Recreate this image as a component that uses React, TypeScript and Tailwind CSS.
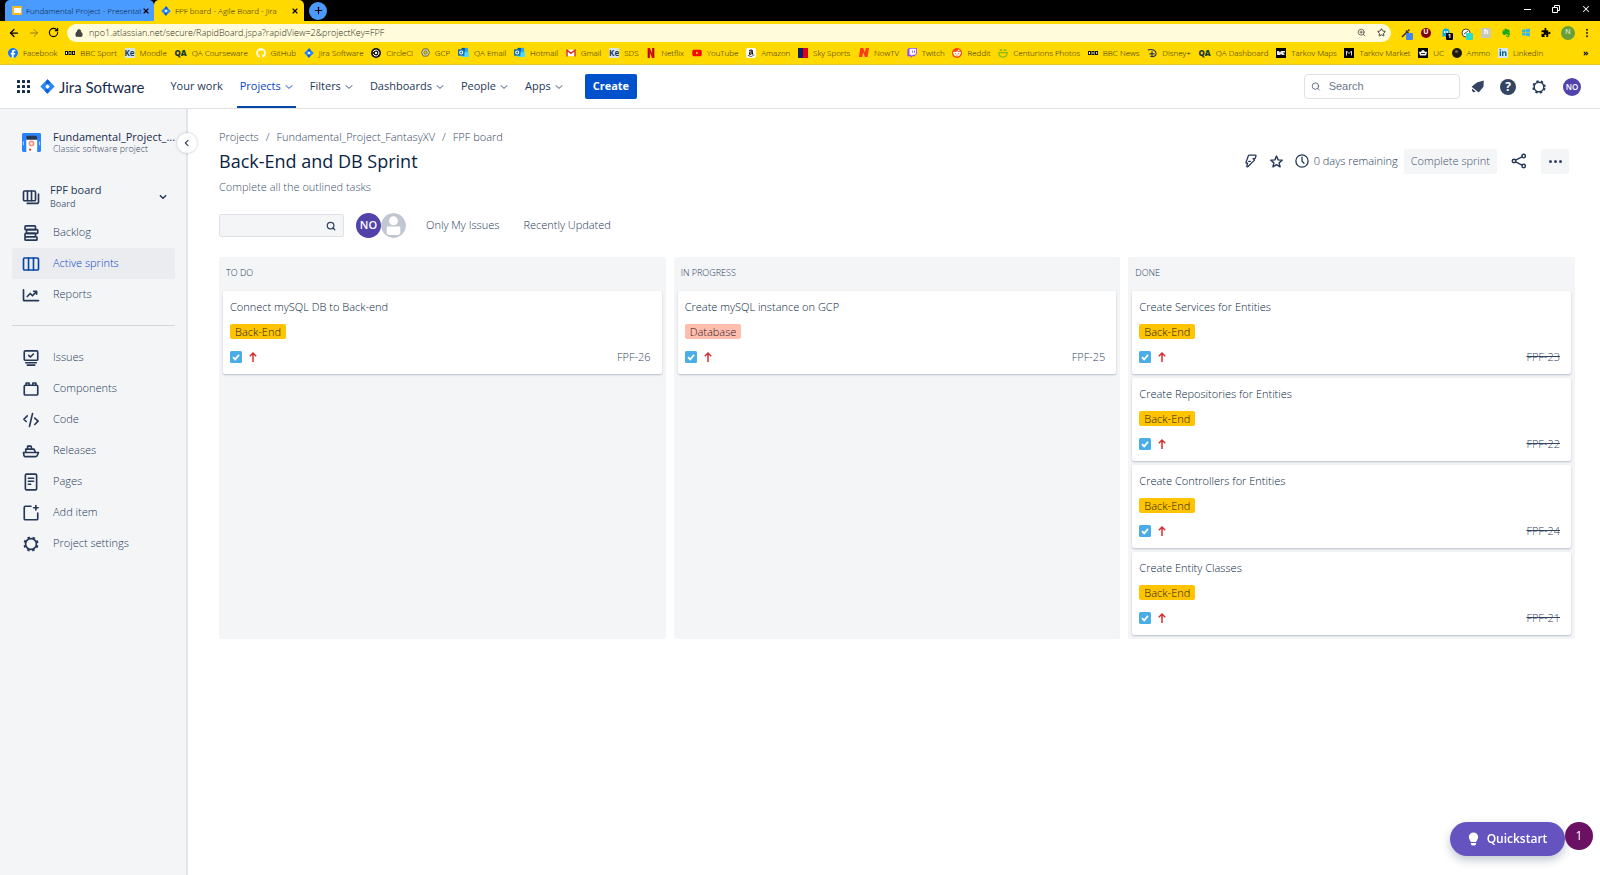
import type { ReactNode } from "react";
import {
  FaAmazon,
  FaEvernote,
  FaFacebook,
  FaGithub,
  FaLinkedinIn,
  FaPuzzlePiece,
  FaRedditAlien,
  FaWindows,
  FaYoutube,
} from "react-icons/fa6";
import { ArrowLeft, ArrowRight, Lock, Plus, RotateCw, Search, Star, X, ZoomIn } from "lucide-react";

/* ---------- Browser chrome ---------- */

function JiraMark({ className }: { className?: string }) {
  return (
    <svg viewBox="0 0 24 24" className={className} aria-hidden="true">
      <path d="M12 0.5 23.5 12 12 23.5 0.5 12Z" fill="#2684ff" />
      <path d="M12 0.5 17 5.5 12 9 9 5.5ZM12 23.5 7 18.5 12 15 15 18.5Z" fill="#0f5fd6" />
      <path d="M12 8.2 15.8 12 12 15.8 8.2 12Z" fill="#fff" />
    </svg>
  );
}

function Tile({ className, children }: { className: string; children?: ReactNode }) {
  return (
    <span
      aria-hidden="true"
      className={`flex h-[10px] w-[10px] items-center justify-center overflow-hidden text-[8px] leading-none ${className}`}
    >
      {children}
    </span>
  );
}

function BbcIcon() {
  return (
    <svg viewBox="0 0 10 10" className="h-[10px] w-[10px]" aria-hidden="true">
      <path d="M0 3h3v4H0zM3.5 3h3v4h-3zM7 3h3v4H7z" fill="#111" />
      <path d="M1 4h1v2H1zM4.5 4h1v2h-1zM8 4h1.2v.6H8.6v.9h.6V6H8z" fill="#fff" />
    </svg>
  );
}

function QaIcon() {
  return <span aria-hidden="true" className="text-[8px] leading-none font-extrabold text-[#12352f]">QA</span>;
}

function OutlookIcon() {
  return (
    <svg viewBox="0 0 12 12" className="h-[11px] w-[11px]" aria-hidden="true">
      <path d="M4 1h7v7H4z" fill="#28a8ea" />
      <path d="M4 1h3.5v3.5H4z" fill="#0f4f8f" />
      <path d="M4 7l8-2v6H4z" fill="#50d9ff" />
      <path d="M0 2.5h7v7H0z" fill="#0f6cbd" />
      <circle cx="3.5" cy="6" r="1.7" fill="none" stroke="#fff" strokeWidth="1.1" />
    </svg>
  );
}

function CircleCiIcon() {
  return (
    <svg viewBox="0 0 12 12" className="h-[10px] w-[10px]" aria-hidden="true">
      <circle cx="6" cy="6" r="6" fill="#161616" />
      <circle cx="6" cy="6" r="1.4" fill="#fff" />
      <path d="M2.6 5a3.5 3.5 0 1 1 0 2" fill="none" stroke="#fff" strokeWidth="1.2" />
    </svg>
  );
}

function GcpIcon() {
  return (
    <svg viewBox="0 0 12 12" className="h-[9px] w-[9px]" aria-hidden="true">
      <path d="M3.2 1.2h5.6L11.5 6l-2.7 4.8H3.2L.5 6Z" fill="#cfd0b0" stroke="#6b6a3a" strokeWidth="1.3" />
      <circle cx="6" cy="6" r="2" fill="#ffd900" stroke="#6b6a3a" strokeWidth="1.3" />
    </svg>
  );
}

function GmailIcon() {
  return (
    <svg viewBox="0 0 12 10" className="h-[8px] w-[10px]" aria-hidden="true">
      <path d="M1 1h10v8H1z" fill="#fff" />
      <path d="M1 9.5V1.5l5 4 5-4v8" fill="none" stroke="#d93025" strokeWidth="1.8" />
    </svg>
  );
}

function NetflixIcon({ slanted = false }: { slanted?: boolean }) {
  return slanted ? (
    <svg viewBox="0 0 12 12" className="h-[11px] w-[11px]" aria-hidden="true">
      <path d="M1 11 2.6 1h3l2 5 .9-5H12l-1.6 10H7.6l-2.1-5-.9 5Z" fill="#fb3b1e" />
    </svg>
  ) : (
    <svg viewBox="0 0 12 12" className="h-[10px] w-[10px]" aria-hidden="true">
      <path d="M2 0h2.6v12H2zM7.4 0H10v12H7.4z" fill="#b1060f" />
      <path d="M2 0h2.6L10 12H7.4Z" fill="#e50914" />
    </svg>
  );
}

function SmileIcon() {
  return (
    <svg viewBox="0 0 12 12" className="h-[10px] w-[10px]" aria-hidden="true" fill="none" stroke="#86b817" strokeWidth="1.4">
      <path d="M1 5.5h10c0 3.200-2 5.500-5 5.500S1 8.700 1 5.500ZM2.500 3.500c0-2 2-2 2 0M7.500 3.500c0-2 2-2 2 0" />
    </svg>
  );
}

function DisneyIcon() {
  return (
    <svg viewBox="0 0 12 12" className="h-[10px] w-[10px]" aria-hidden="true" fill="none" stroke="#1b2a6b" strokeWidth="1.300">
      <path d="M1 2.500C6 .500 11 3 11 7c0 3-4 4-7 3M6 4v7M3 7.500c2-1.500 5-1 6 0" />
    </svg>
  );
}

const bookmarks: { label: string; icon: ReactNode }[] = [
  {
    label: "Facebook",
    icon: (
      <span className="rounded-full bg-white">
        <FaFacebook className="h-[10px] w-[10px] text-[#1877f2]" />
      </span>
    ),
  },
  { label: "BBC Sport", icon: <BbcIcon /> },
  { label: "Moodle", icon: <Tile className="bg-[#dbe4e4] font-bold text-[#123c7a]">Ke</Tile> },
  { label: "QA Courseware", icon: <QaIcon /> },
  { label: "GitHub", icon: <FaGithub className="h-[10px] w-[10px] text-white" /> },
  { label: "Jira Software", icon: <JiraMark className="h-[10px] w-[10px]" /> },
  { label: "CircleCI", icon: <CircleCiIcon /> },
  { label: "GCP", icon: <GcpIcon /> },
  { label: "QA Email", icon: <OutlookIcon /> },
  { label: "Hotmail", icon: <OutlookIcon /> },
  { label: "Gmail", icon: <GmailIcon /> },
  { label: "SDS", icon: <Tile className="bg-[#dbe4e4] font-bold text-[#123c7a]">Ke</Tile> },
  { label: "Netflix", icon: <NetflixIcon /> },
  { label: "YouTube", icon: <FaYoutube className="h-[10px] w-[10px] text-[#f00]" /> },
  {
    label: "Amazon",
    icon: (
      <Tile className="rounded-[2px] bg-white text-black">
        <FaAmazon className="h-[8px] w-[8px]" />
      </Tile>
    ),
  },
  {
    label: "Sky Sports",
    icon: (
      <Tile className="bg-[#0b1f6b]">
        <span className="ml-auto h-full w-[5px] bg-[#e10019]" />
      </Tile>
    ),
  },
  { label: "NowTV", icon: <NetflixIcon slanted /> },
  {
    label: "Twitch",
    icon: (
      <svg viewBox="0 0 12 12" className="h-[10px] w-[10px]" aria-hidden="true">
        <path d="M2 0h10v7L9 10H6.500L4.500 12V10H.5V2Z" fill="#9146ff" />
        <path d="M3 1h8v5.500L9.500 8H7L5.300 9.500V8H3Z" fill="#fff" />
        <path d="M6 3h1v2.800H6zM8.600 3h1v2.800h-1z" fill="#9146ff" />
      </svg>
    ),
  },
  {
    label: "Reddit",
    icon: (
      <Tile className="rounded-full bg-[#ff4500] text-white">
        <FaRedditAlien className="h-[8px] w-[8px]" />
      </Tile>
    ),
  },
  { label: "Centurions Photos", icon: <SmileIcon /> },
  { label: "BBC News", icon: <BbcIcon /> },
  { label: "Disney+", icon: <DisneyIcon /> },
  { label: "QA Dashboard", icon: <QaIcon /> },
  {
    label: "Tarkov Maps",
    icon: (
      <svg viewBox="0 0 10 10" className="h-[10px] w-[10px]" aria-hidden="true">
        <path d="M0 0h10v10H0z" fill="#000" />
        <path d="M1 3h2l1 1.500L5 3h4v1.500H7L9 7H6L5 6 4 7H1Z" fill="#e6e6e6" />
      </svg>
    ),
  },
  {
    label: "Tarkov Market",
    icon: (
      <svg viewBox="0 0 10 10" className="h-[10px] w-[10px]" aria-hidden="true">
        <path d="M0 0h10v10H0z" fill="#000" />
        <path d="M2.500 7.500V3L5 5.500 7.500 3v4.500" fill="none" stroke="#d8d8d8" />
      </svg>
    ),
  },
  {
    label: "UC",
    icon: (
      <svg viewBox="0 0 10 10" className="h-[10px] w-[10px]" aria-hidden="true">
        <path d="M0 0h10v10H0z" fill="#000" />
        <path d="M1 4q1-1 2 0 .5-2 2-2t2 2q1-1 2 0L8 7.500H2Z" fill="#f2f2f2" />
        <path d="M3 5.500h4" stroke="#000" strokeWidth=".8" />
      </svg>
    ),
  },
  {
    label: "Ammo",
    icon: (
      <Tile className="rounded-full bg-[#1d1a10]">
        <span className="mb-[2px] h-[3px] w-[3px] rounded-full bg-[#6d684a]" />
      </Tile>
    ),
  },
  {
    label: "LinkedIn",
    icon: (
      <Tile className="bg-[#d5e6ee]">
        <FaLinkedinIn className="h-[8px] w-[8px] text-[#0a66a2]" />
      </Tile>
    ),
  },
];

function Browser() {
  return (
    <div className="text-[#1f1b00]">
      <div className="flex h-[21px] items-stretch bg-black pl-[5px]">
        <div className="flex w-[149px] items-center rounded-t-[5px] bg-[#4a9bff] pr-[5px] pl-[7px] text-[#04152a]">
          <span className="flex h-[9px] w-[10px] shrink-0 items-center justify-center rounded-[1px] bg-[#f5ba26]">
            <span className="h-[5px] w-[7px] bg-white" />
          </span>
          <span className="ml-1 text-[8px] leading-3 font-light whitespace-nowrap">Fundamental Project - Presentat</span>
          <button type="button" aria-label="Close tab" className="ml-auto text-black">
            <X className="h-[8px] w-[8px]" strokeWidth={3.5} />
          </button>
        </div>
        <div className="flex w-[150px] items-center rounded-t-[5px] bg-[#ffd900] pr-[5px] pl-[7px]">
          <JiraMark className="h-[10px] w-[10px]" />
          <span className="ml-1 text-[8px] leading-3 font-light whitespace-nowrap">FPF board - Agile Board - Jira</span>
          <button type="button" aria-label="Close tab" className="ml-auto text-black">
            <X className="h-[8px] w-[8px]" strokeWidth={3.5} />
          </button>
        </div>
        <button
          type="button"
          aria-label="New tab"
          className="ml-[5px] flex h-[18px] w-[18px] items-center justify-center self-center rounded-full bg-[#4a9bff] text-black"
        >
          <Plus className="h-[11px] w-[11px]" strokeWidth={2.5} />
        </button>
        <div className="mr-[9px] ml-auto flex items-center gap-[21px] pb-[3px] text-white">
          <button type="button" aria-label="Minimise">
            <span className="block h-px w-[7px] bg-white" />
          </button>
          <button type="button" aria-label="Restore">
            <svg viewBox="0 0 8 8" className="h-[8px] w-[8px]" fill="none" stroke="currentColor" strokeWidth="1">
              <path d="M.5 2.500h5v5h-5zM2.500 2.500v-2h5v5h-2" />
            </svg>
          </button>
          <button type="button" aria-label="Close window">
            <X className="h-[10px] w-[10px]" strokeWidth={2.500} />
          </button>
        </div>
      </div>

      <div className="flex h-[23px] items-center bg-[#ffd900] pr-[11px] pl-[8px] text-black">
        <button type="button" aria-label="Back">
          <ArrowLeft className="h-[12px] w-[12px]" strokeWidth={2.500} />
        </button>
        <button type="button" aria-label="Forward" className="ml-2 text-[#8f7c10]">
          <ArrowRight className="h-[12px] w-[12px]" />
        </button>
        <button type="button" aria-label="Reload" className="ml-2">
          <RotateCw className="h-[11px] w-[11px]" strokeWidth={2.500} />
        </button>
        <div className="ml-2 flex h-[18px] flex-1 items-center rounded-full bg-[#fffbdb] pr-[5px] pl-2">
          <Lock className="h-[8px] w-[8px] fill-[#444] text-[#444]" strokeWidth={3} />
          <input
            aria-label="Address"
            defaultValue="npo1.atlassian.net/secure/RapidBoard.jspa?rapidView=2&projectKey=FPF"
            className="ml-1.5 min-w-0 flex-1 bg-transparent text-[9px] leading-3 font-light text-[#2b2b22] outline-none"
          />
          <ZoomIn className="h-[9px] w-[9px] text-[#444]" />
          <Star className="ml-[11px] h-[9px] w-[9px] text-[#333]" strokeWidth={2.500} />
        </div>
        <div className="ml-[10px] flex items-center gap-[10px]">
          <span className="relative h-[10px] w-[10px]">
            <svg viewBox="0 0 10 10" className="h-[10px] w-[10px]" stroke="#333" strokeWidth="1.500">
              <path d="M1 9 6 4M5 2.500 7.500 5M7 3 8.500 1.500" />
            </svg>
            <span className="absolute top-[5px] left-[5px] h-[7px] w-[7px] rounded-[1px] bg-[#4285f4]" />
          </span>
          <span className="flex h-[10px] w-[10px] items-center justify-center rounded-full bg-[#800000] text-[7px] font-bold text-white">
            U
          </span>
          <span className="relative h-[10px] w-[10px]">
            <svg viewBox="0 0 10 10" className="h-[10px] w-[10px]">
              <path d="M1.500 9V4a3.500 3.500 0 0 1 7 0v5l-1.700-1L5 9 3.300 8Z" fill="#00aef0" />
              <circle cx="3.700" cy="4" r=".9" fill="#fff" />
              <circle cx="6.300" cy="4" r=".9" fill="#fff" />
            </svg>
            <span className="absolute top-[5px] left-[5px] flex h-[7px] w-[7px] items-center justify-center rounded-[1px] bg-black text-[6px] font-bold text-white">
              1
            </span>
          </span>
          <span className="relative h-[10px] w-[10px]">
            <svg viewBox="0 0 10 10" className="h-[10px] w-[10px]" fill="#fff" stroke="#444">
              <circle cx="5" cy="5" r="4" />
              <path d="M3 6 7 3" />
            </svg>
            <span className="absolute top-[5px] left-[5px] h-[7px] w-[7px] rounded-[1px] bg-[#2bdccb]" />
          </span>
          <span className="flex h-[10px] w-[10px] items-center justify-center rounded-[1px] bg-[#c8c8bd] text-[7px] font-bold text-white">
            h
          </span>
          <FaEvernote className="h-[10px] w-[10px] text-[#17a81a]" />
          <FaWindows className="h-[9px] w-[10px] text-[#38b6e8]" />
          <FaPuzzlePiece className="h-[9px] w-[10px] text-black" />
          <span className="flex h-[14px] w-[14px] items-center justify-center rounded-full bg-[#689f38] text-[7px] text-white">
            N
          </span>
          <button type="button" aria-label="Browser menu">
            <svg viewBox="0 0 4 12" className="h-[10px] w-[4px]" fill="#222">
              <circle cx="2" cy="2" r="1.200" />
              <circle cx="2" cy="6" r="1.200" />
              <circle cx="2" cy="10" r="1.200" />
            </svg>
          </button>
        </div>
      </div>

      <div className="flex h-[21px] items-center justify-between border-b border-[#e3c62a] bg-[#ffd900] pr-[11px] pb-[3px] pl-[8px] text-[8px] leading-3 font-light">
        {bookmarks.map((b, i) => (
          <a key={i} href="#" className="flex items-center gap-[5px] whitespace-nowrap">
            {b.icon}
            {b.label}
          </a>
        ))}
        <button type="button" aria-label="More bookmarks" className="ml-8 text-[9px] font-bold text-black">
          »
        </button>
      </div>
    </div>
  );
}

/* ---------- Icons ---------- */

function Line({ children, className = "h-[18px] w-[18px]" }: { children: ReactNode; className?: string }) {
  return (
    <svg
      viewBox="0 0 24 24"
      className={className}
      fill="none"
      stroke="currentColor"
      strokeWidth="2.200"
      strokeLinejoin="round"
      strokeLinecap="round"
      aria-hidden="true"
    >
      {children}
    </svg>
  );
}

function Chevron() {
  return (
    <Line className="h-[8px] w-[8px]">
      <path d="M3 8l9 8 9-8" strokeWidth="3.200" />
    </Line>
  );
}

function Gear({ className }: { className?: string }) {
  return (
    <svg viewBox="0 0 24 24" className={className} aria-hidden="true" fill="none" stroke="currentColor">
      <circle cx="12" cy="12" r="7.200" strokeWidth="2.200" />
      <circle cx="12" cy="12" r="8.800" strokeWidth="2.600" strokeDasharray="3.400 3.512" strokeDashoffset="-1.800" />
    </svg>
  );
}

const BoardsIcon = (
  <Line>
    <rect x="2" y="4" width="16" height="13" rx="1.500" />
    <path d="M7.300 4v13M12.700 4v13M7 20.500h13.500q1.500 0 1.500-1.500V8" />
  </Line>
);
const BacklogIcon = (
  <Line>
    <rect x="4" y="2.500" width="14" height="5" rx="1" />
    <rect x="6" y="7.500" width="15" height="5" rx="1" />
    <rect x="4" y="12.500" width="14" height="4.500" rx="1" />
    <rect x="4" y="17" width="16" height="4.500" rx="1" />
  </Line>
);
const SprintIcon = (
  <Line>
    <rect x="2" y="4" width="20" height="16" rx="1.500" />
    <path d="M8.700 4v16M15.300 4v16" />
  </Line>
);
const ReportsIcon = (
  <Line>
    <path d="M2 5v13.500q0 1 1 1h19M7 14l4-4 3 3 5-5.500M15.500 7h4v4" />
  </Line>
);
const IssuesIcon = (
  <Line>
    <rect x="3" y="2.500" width="18" height="12.500" rx="1.500" />
    <path d="M9 8.500l2.200 2.200 4-4M5 18.300h14M7 21.500h10" />
  </Line>
);
const ComponentsIcon = (
  <Line>
    <rect x="3" y="7" width="18" height="13" rx="1.500" />
    <path d="M5.500 7V4h4v3M14.500 7V4h4v3" />
  </Line>
);
const CodeIcon = (
  <Line>
    <path d="M7 6.500 2.500 11l3 3M17 9.500l4.500 4L17 18M14 3.500l-4 17" />
  </Line>
);
const ReleasesIcon = (
  <Line>
    <path d="M2 14h20l-2 4.500q-.6 1-1.700 1H4q-1 0-1.300-1ZM5 14V9.500h11l2 4.500M7.500 9V5.500h4.500l1 3.500" />
  </Line>
);
const PagesIcon = (
  <Line>
    <rect x="4.500" y="1.500" width="15" height="21" rx="1.500" />
    <path d="M8.500 7h7M8.500 11h7M8.500 15h3" />
  </Line>
);
const AddIcon = (
  <Line>
    <path d="M12 3H4.500Q3 3 3 4.500v15Q3 21 4.500 21h15q1.500 0 1.500-1.500V12M18.500 2v6M15.500 5h6" />
  </Line>
);

/* ---------- Jira header ---------- */

const navItems = [
  { label: "Your work", menu: false, active: false },
  { label: "Projects", menu: true, active: true },
  { label: "Filters", menu: true, active: false },
  { label: "Dashboards", menu: true, active: false },
  { label: "People", menu: true, active: false },
  { label: "Apps", menu: true, active: false },
];

function Header() {
  return (
    <header className="flex h-[44px] items-stretch border-b border-[#dfe1e6] bg-white pr-[19px] pl-[17px]">
      <button type="button" aria-label="Switch product" className="text-[#172b4d]">
        <svg viewBox="0 0 13 13" className="h-[13px] w-[13px]" fill="currentColor">
          {[0, 5, 10].map((y) => [0, 5, 10].map((x) => <rect key={`${x}-${y}`} x={x} y={y} width="3" height="3" rx=".6" />))}
        </svg>
      </button>
      <a href="#" className="ml-[10px] flex items-center gap-1 text-[#172b4d]">
        <JiraMark className="h-[15px] w-[15px]" />
        <span className="font-['Lato','Open_Sans',sans-serif] text-[15px] leading-5 whitespace-nowrap">Jira Software</span>
      </a>
      <nav className="ml-[23px] flex items-stretch gap-[11px]">
        {navItems.map((n) => (
          <button
            key={n.label}
            type="button"
            className={
              n.active
                ? "flex items-center gap-1 border-b-2 border-[#0747a6] px-[3px] pt-[2px] text-[11px] whitespace-nowrap text-[#0747c6]"
                : "flex items-center gap-1 px-[3px] text-[11px] whitespace-nowrap text-[#253858]"
            }
          >
            {n.label}
            {n.menu && (
              <span className={n.active ? "text-[#5b83d8]" : "text-[#7a869a]"}>
                <Chevron />
              </span>
            )}
          </button>
        ))}
      </nav>
      <button
        type="button"
        className="ml-[19px] h-[25px] self-center rounded-[2px] bg-[#0052cc] px-2 text-[11px] font-bold text-white"
      >
        Create
      </button>
      <div className="ml-auto flex items-center">
        <label className="flex h-[25px] w-[156px] items-center rounded-[4px] border border-[#dfe1e6] px-[6px]">
          <Search className="h-[11px] w-[11px] text-[#42526e]" />
          <input
            type="text"
            aria-label="Search"
            placeholder="Search"
            className="ml-2 w-full min-w-0 bg-transparent font-['Liberation_Sans',sans-serif] text-[11px] outline-none placeholder:text-[#6b778c]"
          />
        </label>
        <button type="button" aria-label="Notifications" className="ml-[10px] text-[#344563]">
          <svg viewBox="0 0 24 24" className="h-[15px] w-[15px]" fill="currentColor">
            <path d="M22 2.500 21.500 12.500 14 21.500 2.500 12.500 11 5.500ZM3.500 15.500l5.500 4.300q-2 2.200-4.500.4T3.500 15.500Z" />
          </svg>
        </button>
        <button
          type="button"
          aria-label="Help"
          className="ml-[15px] flex h-[16px] w-[16px] items-center justify-center rounded-full bg-[#344563] text-[12px] leading-none font-bold text-white"
        >
          ?
        </button>
        <button type="button" aria-label="Settings" className="ml-[15px] text-[#253858]">
          <Gear className="h-[16px] w-[16px]" />
        </button>
        <button
          type="button"
          aria-label="Profile"
          className="ml-[16px] flex h-[18px] w-[18px] items-center justify-center rounded-full bg-[#5243aa] text-[8px] font-semibold text-white"
        >
          NO
        </button>
      </div>
    </header>
  );
}

/* ---------- Sidebar ---------- */

function SideLink({ icon, label, active = false }: { icon: ReactNode; label: string; active?: boolean }) {
  return (
    <a
      href="#"
      className={
        active
          ? "flex h-[31px] items-center gap-[13px] rounded-[2px] bg-[#ebecf0] pl-[10px] text-[#0747a6]"
          : "flex h-[31px] items-center gap-[13px] pl-[10px] text-[#253858]"
      }
    >
      {icon}
      <span className={active ? "text-[11px] font-light text-[#0747c6]" : "text-[11px] font-light text-[#253858]"}>{label}</span>
    </a>
  );
}

function Sidebar() {
  return (
    <aside className="relative w-[188px] shrink-0 border-r-2 border-[#e1e4e8] bg-[#f4f5f7] pt-[22px] pr-[11px] pl-3">
      <div className="flex items-center gap-3 pl-[10px]">
        <svg viewBox="0 0 20 20" className="h-[19px] w-[19px] shrink-0" aria-hidden="true">
          <rect width="20" height="20" rx="1.500" fill="#2684ff" />
          <path d="M4.500 20V6q0-3 3-3h6q2.500 0 2.500 3v14Z" fill="#fff" />
          <path d="M4.500 7V4.500q0-2 3-2h6q2.500 0 2.500 2V7Z" fill="#253858" />
          <circle cx="10" cy="11" r="3" fill="#ff8f73" />
          <circle cx="10" cy="11" r="1.300" fill="#fff" />
          <path d="M7.500 16.500h2v2h-2z" fill="#de350b" />
          <path d="M1.500 9v4M18.500 9v4" stroke="#b3d4ff" strokeWidth="1.200" />
        </svg>
        <div className="whitespace-nowrap">
          <div className="text-[11px] leading-[12px] text-[#172b4d]">Fundamental_Project_...</div>
          <div className="text-[9px] leading-[11px] font-light text-[#344563]">Classic software project</div>
        </div>
      </div>
      <button
        type="button"
        aria-label="Collapse sidebar"
        className="absolute top-[24px] -right-[11px] flex h-[20px] w-[20px] items-center justify-center rounded-full bg-white text-[#344563] shadow-[0_0_2px_1px_rgba(9,30,66,0.120)]"
      >
        <Line className="h-[8px] w-[8px]">
          <path d="M15 4l-8 8 8 8" strokeWidth="3.500" />
        </Line>
      </button>

      <button type="button" className="mt-[25px] flex h-[36px] w-full items-center gap-[10px] pl-[10px] text-left text-[#253858]">
        {BoardsIcon}
        <span>
          <span className="block text-[11px] leading-[14px] font-medium text-[#253858]">FPF board</span>
          <span className="block text-[9px] leading-[14px] text-[#505f79]">Board</span>
        </span>
        <span className="mr-2 ml-auto">
          <Line className="h-[8px] w-[8px]">
            <path d="M4 8l8 8 8-8" strokeWidth="4.500" />
          </Line>
        </span>
      </button>
      <nav className="mt-[2px]">
        <SideLink icon={BacklogIcon} label="Backlog" />
        <SideLink icon={SprintIcon} label="Active sprints" active />
        <SideLink icon={ReportsIcon} label="Reports" />
        <hr className="mt-[15px] mb-4 border-[#d3d6dc]" />
        <SideLink icon={IssuesIcon} label="Issues" />
        <SideLink icon={ComponentsIcon} label="Components" />
        <SideLink icon={CodeIcon} label="Code" />
        <SideLink icon={ReleasesIcon} label="Releases" />
        <SideLink icon={PagesIcon} label="Pages" />
        <SideLink icon={AddIcon} label="Add item" />
        <SideLink icon={<Gear className="h-[18px] w-[18px]" />} label="Project settings" />
      </nav>
    </aside>
  );
}

/* ---------- Board ---------- */

type Issue = { key: string; title: string; tag: "Back-End" | "Database"; done?: boolean };

const columns: { name: string; issues: Issue[] }[] = [
  { name: "TO DO", issues: [{ key: "FPF-26", title: "Connect mySQL DB to Back-end", tag: "Back-End" }] },
  { name: "IN PROGRESS", issues: [{ key: "FPF-25", title: "Create mySQL instance on GCP", tag: "Database" }] },
  {
    name: "DONE",
    issues: [
      { key: "FPF-23", title: "Create Services for Entities", tag: "Back-End", done: true },
      { key: "FPF-22", title: "Create Repositories for Entities", tag: "Back-End", done: true },
      { key: "FPF-24", title: "Create Controllers for Entities", tag: "Back-End", done: true },
      { key: "FPF-21", title: "Create Entity Classes", tag: "Back-End", done: true },
    ],
  },
];

function Card({ issue }: { issue: Issue }) {
  return (
    <article className="rounded-[2px] bg-white px-[7px] pt-2 pb-[9px] shadow-[0_1px_2px_rgba(9,30,66,0.250)]">
      <h3 className="text-[11px] leading-4 font-light text-[#091e42]">{issue.title}</h3>
      <span
        className={
          issue.tag === "Database"
            ? "mt-[9px] block w-fit rounded-[2px] bg-[#ffbdad] px-[5px] text-[11px] leading-[15px] font-light text-[#33182b]"
            : "mt-[9px] block w-fit rounded-[2px] bg-[#ffc400] px-[5px] text-[11px] leading-[15px] font-light text-[#241b00]"
        }
      >
        {issue.tag}
      </span>
      <div className="mt-[10px] flex h-4 items-center">
        <svg viewBox="0 0 12 12" className="h-[12px] w-[12px]" role="img" aria-label="Task">
          <rect width="12" height="12" rx="1.500" fill="#4bade8" />
          <path d="M3 6.200 5.200 8.400 9 3.900" fill="none" stroke="#fff" strokeWidth="1.700" />
        </svg>
        <svg viewBox="0 0 12 12" className="ml-[5px] h-[12px] w-[12px]" role="img" aria-label="High priority">
          <path d="M6 11V2M2.800 5.200 6 2 9.200 5.200" fill="none" stroke="#d32f2f" strokeWidth="1.500" />
        </svg>
        <a
          href="#"
          className={
            issue.done
              ? "mr-1 ml-auto text-[11px] font-light text-[#344563] line-through"
              : "mr-1 ml-auto text-[11px] font-light text-[#344563]"
          }
        >
          {issue.key}
        </a>
      </div>
    </article>
  );
}

function Board() {
  return (
    <main className="min-w-0 flex-1 bg-white pr-[25px] pb-6 pl-[31px]">
      <div className="mt-[20px] flex gap-[7px] text-[11px] leading-4 font-light text-[#344563]">
        <a href="#">Projects</a>
        <span>/</span>
        <a href="#">Fundamental_Project_FantasyXV</a>
        <span>/</span>
        <a href="#">FPF board</a>
      </div>

      <div className="mt-[3px] flex items-center">
        <h1 className="text-[18px] leading-[26px] font-medium text-[#091e42]">Back-End and DB Sprint</h1>
        <div className="mr-[6px] ml-auto flex items-center text-[#253858]">
          <button type="button" aria-label="Automation">
            <Line className="h-[14px] w-[14px]">
              <path d="M9 2h10.500q1.500 0 1 1.500L19 8h-3.500l2.500 2.500L7 21.500q-2 1.500-2.300-.5l1.500-5.500H4.500Q3 15.500 3.500 14L7.500 3q.4-1 1.500-1ZM11 12.500h-3" />
            </Line>
          </button>
          <button type="button" aria-label="Star" className="ml-3">
            <Line className="h-[13px] w-[13px]">
              <path d="M12 2l3 7 7.500.6-5.700 4.900 1.800 7.300L12 17.800l-6.600 4 1.800-7.300L1.500 9.600 9 9Z" strokeWidth="2.600" />
            </Line>
          </button>
          <Line className="ml-3 h-[14px] w-[14px]">
            <circle cx="12" cy="12" r="10.500" />
            <path d="M12 5.500V12l3.500 4" />
          </Line>
          <span className="ml-[5px] text-[11px] font-light text-[#253858]">0 days remaining</span>
          <button type="button" className="ml-[6px] h-[25px] rounded-[2px] bg-[#f4f5f7] px-[7px] text-[11px] font-light text-[#42526e]">
            Complete sprint
          </button>
          <button type="button" aria-label="Share" className="ml-[14px]">
            <Line className="h-[16px] w-[16px]">
              <circle cx="4.500" cy="12" r="2.600" />
              <circle cx="19" cy="4.500" r="2.600" />
              <circle cx="19" cy="19.500" r="2.600" />
              <path d="M7 10.800 16.500 5.800M7 13.200l9.500 5" />
            </Line>
          </button>
          <button
            type="button"
            aria-label="More actions"
            className="ml-[14px] flex h-[25px] w-[28px] items-center justify-center gap-[2px] rounded-[2px] bg-[#f4f5f7]"
          >
            <span className="h-[3px] w-[3px] rounded-full bg-[#344563]" />
            <span className="h-[3px] w-[3px] rounded-full bg-[#344563]" />
            <span className="h-[3px] w-[3px] rounded-full bg-[#344563]" />
          </button>
        </div>
      </div>
      <p className="mt-[5px] text-[11px] leading-4 font-light text-[#42526e]">Complete all the outlined tasks</p>

      <div className="mt-[18px] flex h-[25px] items-center text-[11px] font-light text-[#253858]">
        <label className="flex h-[23px] w-[125px] items-center rounded-[2px] border border-[#dfe1e6] bg-[#f4f5f7] pr-[7px] pl-2">
          <input type="text" aria-label="Search this board" className="w-full min-w-0 bg-transparent outline-none" />
          <Search className="h-[10px] w-[10px] shrink-0 text-[#344563]" strokeWidth={3} />
        </label>
        <button
          type="button"
          aria-label="Filter by NO"
          className="ml-3 h-[25px] w-[25px] rounded-full bg-[#5243aa] text-[11px] font-semibold text-white"
        >
          NO
        </button>
        <button type="button" aria-label="Unassigned" className="h-[25px] w-[25px] overflow-hidden rounded-full">
          <svg viewBox="0 0 24 24" className="h-[25px] w-[25px]">
            <circle cx="12" cy="12" r="12" fill="#c1c7d0" />
            <circle cx="12" cy="7.500" r="4.300" fill="#fff" />
            <path d="M5.500 13h13v5.500q0 2.500-2.500 2.500H8q-2.500 0-2.500-2.500Z" fill="#fff" />
          </svg>
        </button>
        <button type="button" className="ml-5">
          Only My Issues
        </button>
        <button type="button" className="ml-6">
          Recently Updated
        </button>
      </div>

      <div className="mt-[19px] grid grid-cols-3 gap-2">
        {columns.map((c) => (
          <section key={c.name} className="rounded-[2px] bg-[#f4f5f7] px-1 pb-[4px]">
            <h2 className="px-[3px] pt-[10px] pb-[12px] text-[9px] leading-3 font-light text-[#253858]">{c.name}</h2>
            <div className="flex flex-col gap-1">
              {c.issues.map((i) => (
                <Card key={i.key} issue={i} />
              ))}
            </div>
          </section>
        ))}
      </div>
    </main>
  );
}

export default function App() {
  return (
    <div className="flex min-h-screen flex-col bg-white font-['Open_Sans','Noto_Sans',sans-serif]">
      <Browser />
      <Header />
      <div className="flex flex-1">
        <Sidebar />
        <Board />
      </div>
      <div className="fixed right-[7px] bottom-[19px] flex items-start">
        <button
          type="button"
          className="flex h-[34px] w-[115px] items-center justify-center gap-2 rounded-full bg-[#6554c0] text-[12px] font-semibold text-white shadow-[0_4px_10px_rgba(9,30,66,0.250)]"
        >
          <svg viewBox="0 0 12 16" className="h-[14px] w-[11px]" fill="currentColor" aria-hidden="true">
            <path d="M6 .5a5.300 5.300 0 0 1 5.300 5.300c0 2.400-1.500 3.700-2.300 5.700H3C2.200 9.500.7 8.200.7 5.800A5.300 5.300 0 0 1 6 .5ZM3 12.500h6v1q0 2-2 2H5q-2 0-2-2Z" />
          </svg>
          Quickstart
        </button>
        <span className="flex h-[28px] w-[28px] items-center justify-center rounded-full bg-[#6b1163] text-[12px] font-medium text-white">
          1
        </span>
      </div>
    </div>
  );
}
